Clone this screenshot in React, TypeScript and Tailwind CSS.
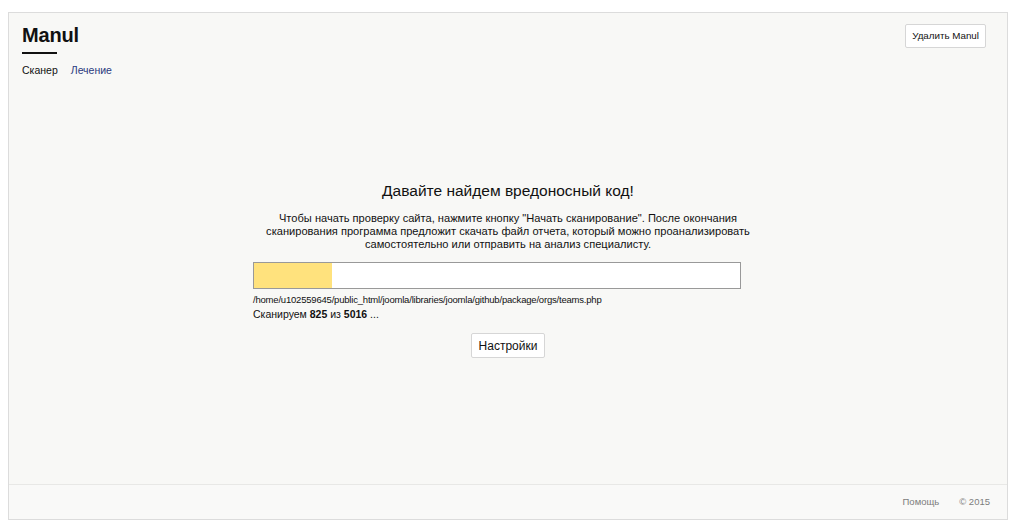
import React from "react";

export default function App() {
  return (
    <div className="w-[1014px] h-[525px] bg-white pt-[12px] pl-[8px]" style={{ fontFamily: '"Liberation Sans", Arial, sans-serif' }}>
      <div className="w-[1000px] h-[508px] border border-[#dcdcdc] bg-[#f8f8f6] flex flex-col">
        <div className="flex-1 flex flex-col relative">
          <div className="flex justify-between items-start pl-[13px] pr-[21px] pt-[10px]">
            <div>
              <div className="text-[20px] font-bold leading-[24px] text-[#111] tracking-[-0.2px]">Manul</div>
              <div className="w-[35px] h-[2px] bg-[#111] mt-[5px]"></div>
              <div className="flex gap-[13px] mt-[9px] text-[10.5px] leading-[14px]">
                <span className="text-[#111]">Сканер</span>
                <span className="text-[#2b3a7e]">Лечение</span>
              </div>
            </div>
            <button className="mt-[1px] h-[24px] px-[6px] bg-white border border-[#d6d6d6] rounded-[2px] text-[9.8px] text-[#111]">
              Удалить Manul
            </button>
          </div>
          <div className="flex flex-col items-center mt-[104px]">
            <div className="text-[15.5px] leading-[20px] text-[#111]">Давайте найдем вредоносный код!</div>
            <div className="mt-[11px] w-[500px] text-center text-[11.1px] leading-[13px] text-[#111]">
              Чтобы начать проверку сайта, нажмите кнопку "Начать сканирование". После окончания сканирования программа предложит скачать файл отчета, который можно проанализировать самостоятельно или отправить на анализ специалисту.
            </div>
            <div className="w-[488px] mt-[11px] mr-[22px]">
              <div className="h-[27px] border border-[#999] bg-white flex">
                <div className="w-[78px] h-full bg-[#ffe27d]"></div>
              </div>
              <div className="mt-[5px] text-[9.5px] leading-[12px] text-[#111] tracking-[-0.2px]">
                /home/u102559645/public_html/joomla/libraries/joomla/github/package/orgs/teams.php
              </div>
              <div className="mt-[1px] text-[10.5px] leading-[14px] text-[#111]">
                Сканируем <b>825</b> из <b>5016</b> ...
              </div>
            </div>
            <button className="mt-[12px] h-[25px] px-[7px] bg-white border border-[#d6d6d6] rounded-[2px] text-[12px] text-[#111]">
              Настройки
            </button>
          </div>
        </div>
        <div className="h-[35px] border-t border-[#e8e8e6] bg-[#f9f9f8] flex justify-end items-center pr-[17px] gap-[20px] text-[9.5px] text-[#7d7d7d]">
          <span>Помощь</span>
          <span>© 2015</span>
        </div>
      </div>
    </div>
  );
}
